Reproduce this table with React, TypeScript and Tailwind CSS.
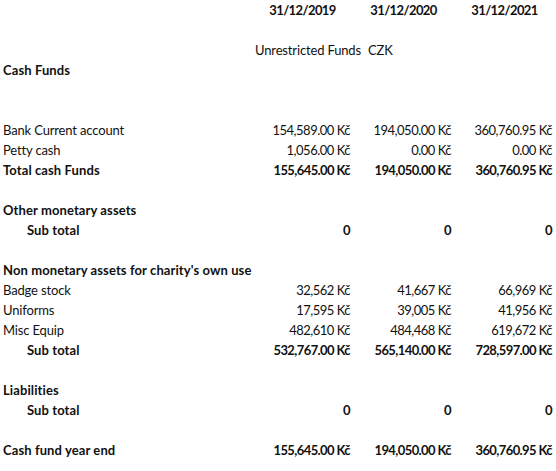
import React from "react";

type Row = {
  label?: string;
  bold?: boolean;
  indent?: boolean;
  vals?: [string, string, string];
  valsBold?: boolean;
  special?: "header" | "unrestricted";
};

const rows: Row[] = [
  { special: "header" },
  {},
  { special: "unrestricted" },
  { label: "Cash Funds", bold: true },
  {},
  {},
  { label: "Bank Current account", vals: ["154,589.00 Kč", "194,050.00 Kč", "360,760.95 Kč"] },
  { label: "Petty cash", vals: ["1,056.00 Kč", "0.00 Kč", "0.00 Kč"] },
  { label: "Total cash Funds", bold: true, vals: ["155,645.00 Kč", "194,050.00 Kč", "360,760.95 Kč"], valsBold: true },
  {},
  { label: "Other monetary assets", bold: true },
  { label: "Sub total", bold: true, indent: true, vals: ["0", "0", "0"], valsBold: true },
  {},
  { label: "Non monetary assets for charity's own use", bold: true },
  { label: "Badge stock", vals: ["32,562 Kč", "41,667 Kč", "66,969 Kč"] },
  { label: "Uniforms", vals: ["17,595 Kč", "39,005 Kč", "41,956 Kč"] },
  { label: "Misc Equip", vals: ["482,610 Kč", "484,468 Kč", "619,672 Kč"] },
  { label: "Sub total", bold: true, indent: true, vals: ["532,767.00 Kč", "565,140.00 Kč", "728,597.00 Kč"], valsBold: true },
  {},
  { label: "Liabilities", bold: true },
  { label: "Sub total", bold: true, indent: true, vals: ["0", "0", "0"], valsBold: true },
  {},
  { label: "Cash fund year end", bold: true, vals: ["155,645.00 Kč", "194,050.00 Kč", "360,760.95 Kč"], valsBold: true },
];

export default function App() {
  return (
    <div
      className="w-[556px] h-[471px] bg-white text-[#111] text-[13px] overflow-hidden"
      style={{ fontFamily: "Lato, 'Liberation Sans', sans-serif" }}
    >
      <div className="grid grid-cols-[252px_101px_101px_101px]">
        {rows.map((r, i) => {
          if (r.special === "header") {
            return (
              <React.Fragment key={i}>
                <div className="h-5" />
                {["31/12/2019", "31/12/2020", "31/12/2021"].map((d) => (
                  <div key={d} className="h-5 leading-5 text-center font-bold tracking-[-0.6px]">
                    {d}
                  </div>
                ))}
              </React.Fragment>
            );
          }
          if (r.special === "unrestricted") {
            return (
              <React.Fragment key={i}>
                <div className="h-5" />
                <div className="col-span-3 h-5 leading-5 pl-[3px] whitespace-nowrap tracking-[-0.15px]">
                  Unrestricted Funds<span className="ml-[7px]">CZK</span>
                </div>
              </React.Fragment>
            );
          }
          return (
            <React.Fragment key={i}>
              <div
                className={`h-5 leading-5 whitespace-nowrap ${
                  r.bold ? "font-bold tracking-[0.1px]" : "tracking-[-0.15px]"
                } ${r.indent ? "pl-[27px]" : "pl-[3px]"}`}
              >
                {r.label ?? ""}
              </div>
              {[0, 1, 2].map((j) => (
                <div
                  key={j}
                  className={`h-5 leading-5 text-right pr-[3px] whitespace-nowrap ${
                    r.valsBold ? "font-bold tracking-[-0.6px]" : "tracking-[-0.5px]"
                  }`}
                >
                  {r.vals ? r.vals[j] : ""}
                </div>
              ))}
            </React.Fragment>
          );
        })}
      </div>
    </div>
  );
}
